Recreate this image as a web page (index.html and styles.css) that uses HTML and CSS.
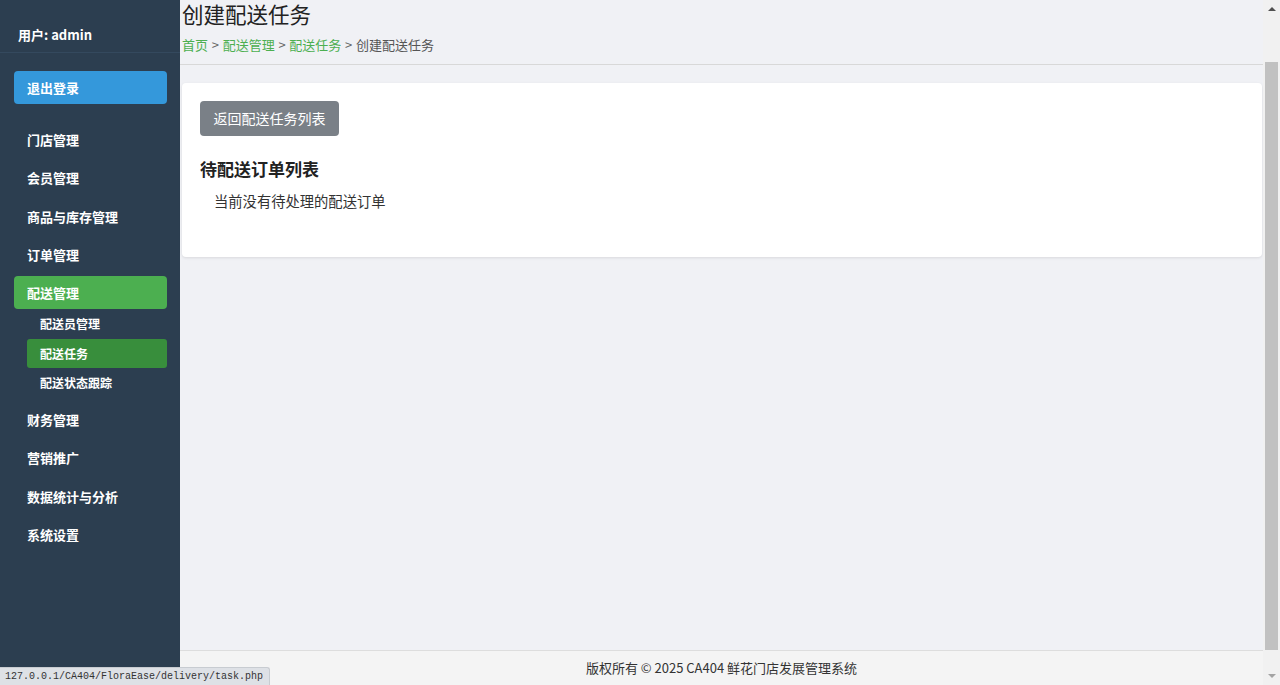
FILE: index.html
```html
<!DOCTYPE html>
<html lang="zh-CN">
<head>
    <meta charset="UTF-8">
    <meta name="viewport" content="width=device-width, initial-scale=1.0">
    <title>创建配送任务</title>
    <link rel="stylesheet" href="styles.css">
</head>
<body>

<div class="layout">
    <!-- Sidebar -->
    <aside class="sidebar">
        <div class="user-info">用户: admin</div>
        <nav class="nav">
            <a class="logout-btn" href="#">退出登录</a>
            <ul class="menu">
                <li><a class="menu-link" href="#">门店管理</a></li>
                <li><a class="menu-link" href="#">会员管理</a></li>
                <li><a class="menu-link" href="#">商品与库存管理</a></li>
                <li><a class="menu-link" href="#">订单管理</a></li>
                <li>
                    <a class="menu-link active" href="#">配送管理</a>
                    <ul class="submenu">
                        <li><a class="sub-link" href="#">配送员管理</a></li>
                        <li><a class="sub-link active" href="#">配送任务</a></li>
                        <li><a class="sub-link" href="#">配送状态跟踪</a></li>
                    </ul>
                </li>
                <li><a class="menu-link" href="#">财务管理</a></li>
                <li><a class="menu-link" href="#">营销推广</a></li>
                <li><a class="menu-link" href="#">数据统计与分析</a></li>
                <li><a class="menu-link" href="#">系统设置</a></li>
            </ul>
        </nav>
    </aside>

    <!-- Main -->
    <div class="main">
        <div class="content">
            <div class="page-header">
                <h1 class="page-title">创建配送任务</h1>
                <div class="breadcrumb">
                    <a href="#">首页</a> <span class="sep">&gt;</span>
                    <a href="#">配送管理</a> <span class="sep">&gt;</span>
                    <a href="#">配送任务</a> <span class="sep">&gt;</span>
                    <span class="current">创建配送任务</span>
                </div>
            </div>

            <div class="card">
                <a class="btn-back" href="#">返回配送任务列表</a>
                <h3 class="card-title">待配送订单列表</h3>
                <p class="empty-text">当前没有待处理的配送订单</p>
            </div>
        </div>

        <footer class="footer">版权所有 © 2025 CA404 鲜花门店发展管理系统</footer>
    </div>

    <!-- Scrollbar -->
    <div class="scrollbar">
        <span class="arrow up"></span>
        <div class="track"><div class="thumb"></div></div>
        <span class="arrow down"></span>
    </div>
</div>

<div class="status-bar">127.0.0.1/CA404/FloraEase/delivery/task.php</div>

</body>
</html>
```

FILE: styles.css
```css
* {
    box-sizing: border-box;
}

html, body {
    margin: 0;
    padding: 0;
    height: 100%;
    overflow: hidden;
}

body {
    font-family: 'Noto Sans CJK SC', 'Noto Sans', sans-serif;
    color: #333;
    background-color: #f0f1f5;
}

a {
    text-decoration: none;
}

.layout {
    display: flex;
    height: 685px;
}

/* Sidebar */
.sidebar {
    width: 180px;
    flex-shrink: 0;
    background-color: #2c3e50;
    color: #fff;
}

.user-info {
    padding: 26px 18px 9px;
    font-size: 13px;
    line-height: 17px;
    font-weight: bold;
    border-bottom: 1px solid #34495e;
}

.nav {
    padding: 18px 13px 0 14px;
}

.logout-btn {
    display: block;
    background-color: #3498db;
    color: #fff;
    font-size: 13px;
    font-weight: bold;
    line-height: 17px;
    padding: 8px 13px;
    border-radius: 4px;
    margin-bottom: 19px;
}

.menu, .submenu {
    list-style: none;
    margin: 0;
    padding: 0;
}

.menu > li {
    margin-bottom: 5.3px;
}

.menu-link {
    display: block;
    color: #fff;
    font-size: 13px;
    font-weight: bold;
    line-height: 17px;
    padding: 8px 13px;
    border-radius: 4px;
}

.menu-link.active {
    background-color: #4caf50;
}

.submenu {
    padding-left: 13px;
}

.sub-link {
    display: block;
    color: #fff;
    font-size: 12px;
    font-weight: bold;
    line-height: 17px;
    padding: 6.25px 13px;
    border-radius: 3px;
}

.sub-link.active {
    background-color: #388e3c;
}

/* Main */
.main {
    flex: 1;
    display: flex;
    flex-direction: column;
}

.content {
    flex: 1;
    padding: 0 1px 0 2px;
}

.page-header {
    padding-bottom: 10px;
    border-bottom: 1px solid #d8d8d8;
    margin-left: -2px;
    margin-right: -1px;
    padding-left: 2px;
}

.page-title {
    margin: 0;
    font-size: 21.5px;
    font-weight: normal;
    line-height: 28px;
    color: #222;
}

.breadcrumb {
    margin-top: 8px;
    font-size: 13px;
    line-height: 18px;
    color: #555;
}

.breadcrumb a {
    color: #4caf50;
}

.breadcrumb .sep {
    color: #666;
    margin: 0 0.8px;
}

.card {
    margin-top: 18px;
    background-color: #fff;
    border-radius: 4px;
    box-shadow: 0 1px 3px rgba(0, 0, 0, 0.1);
    padding: 18px 18px 18px;
}

.btn-back {
    display: inline-block;
    background-color: #7a8087;
    color: #fff;
    font-size: 14px;
    line-height: 17px;
    padding: 9px 13.5px;
    border-radius: 4px;
}

.card-title {
    margin: 21px 0 0;
    font-size: 17px;
    line-height: 24px;
    font-weight: bold;
    color: #222;
}

.empty-text {
    margin: 10px 0 28px;
    padding-left: 14px;
    font-size: 14.3px;
    line-height: 20px;
    color: #333;
}

.footer {
    height: 35px;
    border-top: 1px solid #ddd;
    background-color: #f4f4f4;
    text-align: center;
    font-size: 13px;
    line-height: 34px;
    color: #333;
}

/* Scrollbar */
.scrollbar {
    width: 17px;
    flex-shrink: 0;
    background-color: #f1f1f1;
    display: flex;
    flex-direction: column;
    align-items: center;
}

.arrow {
    width: 0;
    height: 0;
    border-left: 4px solid transparent;
    border-right: 4px solid transparent;
    margin: 7px 0;
}

.arrow.up {
    border-bottom: 4px solid #505050;
}

.arrow.down {
    border-top: 4px solid #a3a3a3;
}

.track {
    flex: 1;
    width: 100%;
    padding: 44px 2px 17px;
}

.thumb {
    height: 100%;
    background-color: #c1c1c1;
}

/* Browser status bubble */
.status-bar {
    position: absolute;
    left: 0;
    bottom: 0;
    height: 18px;
    padding: 0 6px 0 5px;
    background-color: #dee1e6;
    border: 1px solid #c8ccd1;
    border-left: none;
    border-bottom: none;
    border-top-right-radius: 3px;
    font-family: 'Liberation Mono', monospace;
    font-size: 10px;
    line-height: 17px;
    color: #333;
}
```
